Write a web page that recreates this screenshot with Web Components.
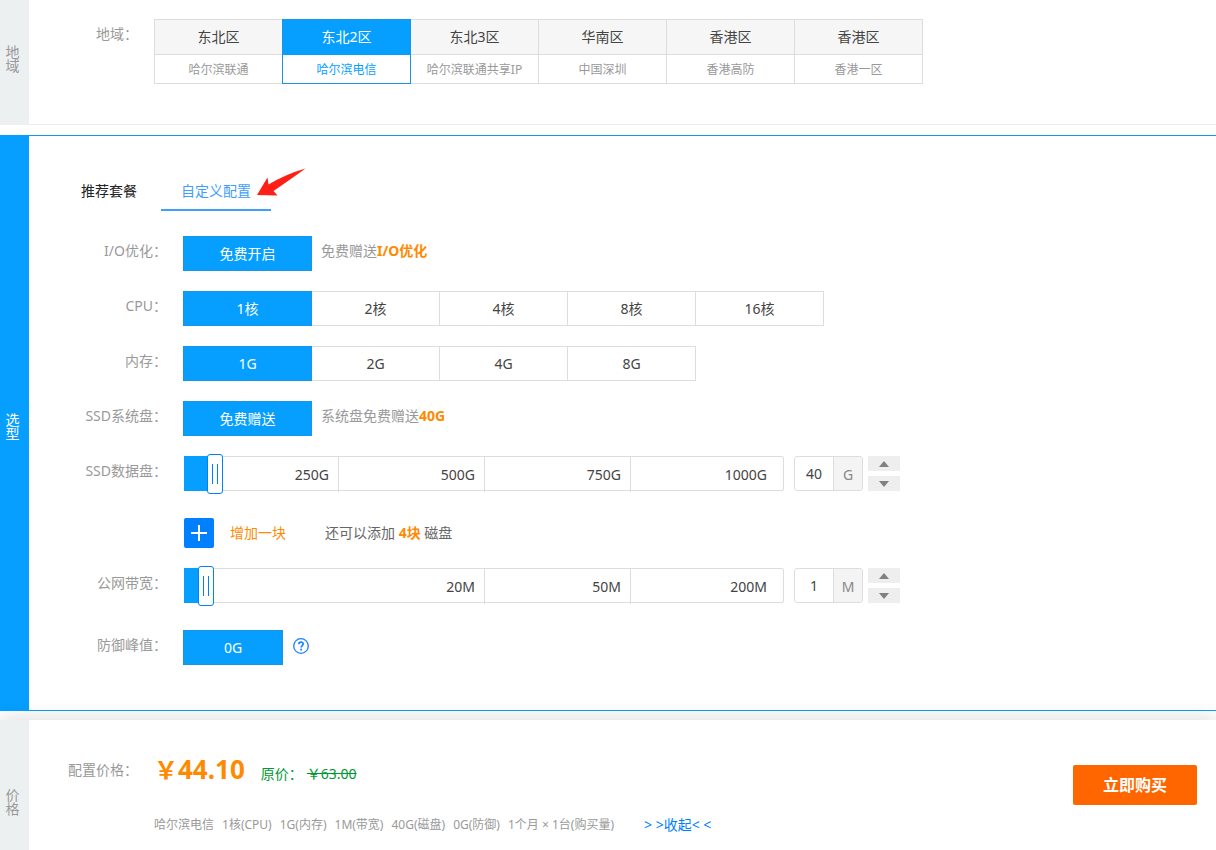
<!DOCTYPE html>
<html lang="zh-CN">
<head>
<meta charset="utf-8">
<meta name="viewport" content="width=device-width, initial-scale=1">
<title>云服务器购买</title>
<style>
  html, body { height: 100%; margin: 0; }
  body {
    font: 14px/20px "Noto Sans", "Noto Sans CJK SC", sans-serif;
    color: #444;
    background: #fff;
  }
</style>
</head>
<body>
<buy-page></buy-page>

<script>
const define = (name, html, setup) => {
  const tpl = document.createElement('template');
  tpl.innerHTML = `<style>*, ::before { box-sizing: border-box; } button, input { font: inherit; color: inherit; margin: 0; padding: 0; border: 0; background: none; } button { cursor: pointer; }</style>` + html;
  customElements.define(name, class extends HTMLElement {
    constructor() {
      super();
      this.attachShadow({ mode: 'open' }).append(tpl.content.cloneNode(true));
    }
    connectedCallback() {
      if (setup) setup(this, s => this.shadowRoot.querySelector(s));
    }
  });
};

/* Section with a vertical caption bar on the left */
define('side-section', `
  <style>
    :host { display: flex; border-bottom: 1px solid #ebeef0; }
    :host([active]) { border-top: 1px solid #1296e8; border-bottom-color: #069fff; }
    :host([last]) { border: 0; position: relative; background: #fff; box-shadow: 0 0 20px rgba(0,0,0,.16); }
    .side {
      flex: 0 0 29px; display: flex; align-items: center; justify-content: center;
      padding: 0 4px 8px 0; background: #ecf0f1; color: #999; margin-bottom: -1px;
    }
    :host([active]) .side { background: #069fff; color: #fff; padding: 8px 4px 0 0; margin: -1px 0; }
    :host([last]) .side { padding: 32px 4px 0 0; margin: 0; }
    h2 { margin: 0; width: 14px; font-size: 14px; line-height: 14px; font-weight: 400; word-break: break-all; }
    .body { flex: 1; min-width: 0; }
  </style>
  <div class="side"><h2></h2></div>
  <div class="body"><slot></slot></div>`,
  (el, $) => { $('h2').textContent = el.getAttribute('caption'); });

/* Label on the left, controls on the right */
define('form-row', `
  <style>
    :host { display: flex; align-items: flex-start; gap: 16px; }
    .label { flex: 0 0 var(--label-width, 138px); text-align: right; line-height: 30px; color: #999; }
    .content { flex: 1; min-width: 0; display: flex; align-items: flex-start; }
  </style>
  <div class="label"></div>
  <div class="content" role="group"><slot></slot></div>`,
  (el, $) => {
    const text = el.getAttribute('label') || '';
    $('.label').textContent = text;
    if (text) $('.content').setAttribute('aria-label', text);
  });

define('region-option', `
  <style>
    :host { display: block; flex: 0 1 129px; margin-right: -1px; }
    :host([selected]) { position: relative; z-index: 1; }
    button { display: block; width: 100%; border: 1px solid #ddd; background: #fff; text-align: center; }
    span { display: block; white-space: nowrap; }
    .name { line-height: 34px; background: #f6f6f6; border-bottom: 1px solid #ddd; }
    .line { height: 28px; font-size: 12px; line-height: 30px; color: #999; }
    :host([selected]) button { border-color: #1a95e4; }
    :host([selected]) .name { background: #069fff; border-color: #069fff; color: #fff; }
    :host([selected]) .line { color: #069fff; }
  </style>
  <button type="button"><span class="name"></span><span class="line"><slot></slot></span></button>`,
  (el, $) => {
    $('.name').textContent = el.getAttribute('name');
    $('button').setAttribute('aria-pressed', el.hasAttribute('selected'));
  });

define('option-button', `
  <style>
    :host { display: block; flex: 0 1 129px; margin-right: -1px; }
    :host([compact]) { flex-basis: 100px; }
    :host([selected]) { position: relative; z-index: 1; }
    button { display: block; width: 100%; height: 35px; border: 1px solid #ddd; background: #fff; line-height: 33px; white-space: nowrap; }
    :host([selected]) button { background: #069fff; border-color: #1a95e4; color: #fff; }
  </style>
  <button type="button"><slot></slot></button>`,
  (el, $) => $('button').setAttribute('aria-pressed', el.hasAttribute('selected')));

define('row-note', `
  <style>
    :host { display: block; margin-left: 10px; line-height: 30px; color: #999; }
    ::slotted(b) { color: #ff8a00; }
  </style><slot></slot>`);

define('plan-tabs', `
  <style>
    :host { display: flex; gap: 4px; padding-left: 32px; }
    button { position: relative; height: 40px; padding: 0 20px; color: #222; border-bottom: 2px solid transparent; line-height: 40px; }
    button[aria-selected=true] { color: #409eff; border-color: #409eff; }
    svg { position: absolute; left: 95px; top: -3px; pointer-events: none; }
  </style>
  <div role="tablist" style="display:contents">
    <button type="button" role="tab" aria-selected="false">推荐套餐</button>
    <button type="button" role="tab" aria-selected="true">自定义配置
      <svg width="50" height="30" viewBox="0 0 50 30" aria-hidden="true"><path fill="#ff1f14" d="M1 27 L11.500 9.500 L12.500 16.500 Q30 6 49.500 .500 Q35 11 17.500 23 L21.500 27.500 Z"/></svg>
    </button>
  </div>`);

/* Range input drawn over a scale; stops="span:label ..." gives each segment's share */
define('scale-slider', `
  <style>
    :host { display: block; position: relative; flex: 0 1 600px; margin-left: 1px; }
    .scale { display: grid; height: 35px; border: 1px solid #ddd; border-radius: 2px; }
    .scale span { padding-right: 9px; text-align: right; line-height: 35px; height: 35px; border-right: 1px solid #ddd; }
    .scale span:last-child { border: 0; padding-right: 16px; }
    input {
      -webkit-appearance: none; appearance: none; position: absolute; left: 0; top: -2px;
      width: 100%; height: 40px; cursor: pointer;
    }
    input::-webkit-slider-runnable-track {
      height: 40px;
      background: linear-gradient(#069fff, #069fff) 0 2px / var(--fill) 35px no-repeat;
      border-radius: 2px;
    }
    input::-webkit-slider-thumb {
      -webkit-appearance: none; width: 16px; height: 40px;
      border: 1px solid #0080ff; border-radius: 3px;
      background:
        linear-gradient(#0080ff, #0080ff) 4px 9px / 1px 20px no-repeat,
        linear-gradient(#0080ff, #0080ff) 9px 9px / 1px 20px no-repeat,
        #fff;
    }
  </style>
  <div class="scale"></div>
  <input type="range" min="0" max="1000">`,
  (el, $) => {
    const stops = el.getAttribute('stops').split(' ').map(s => s.split(':'));
    const scale = $('.scale'), input = $('input');
    scale.style.gridTemplateColumns = stops.map(s => `minmax(0, ${s[0]}fr)`).join(' ');
    scale.replaceChildren(...stops.map(s => Object.assign(document.createElement('span'), { textContent: s[1] })));
    input.value = el.getAttribute('value');
    input.setAttribute('aria-label', el.getAttribute('label'));
    const paint = () => input.style.setProperty('--fill', input.value / 10 + '%');
    input.addEventListener('input', paint);
    paint();
  });

define('number-stepper', `
  <style>
    :host { display: flex; gap: 5px; margin-left: 10px; }
    .box { display: flex; width: 69px; height: 35px; border: 1px solid #ddd; border-radius: 3px; overflow: hidden; }
    input { flex: 1; min-width: 0; text-align: center; }
    .unit { flex: 0 0 29px; border-left: 1px solid #ddd; background: #f4f4f4; color: #888; text-align: center; line-height: 35px; }
    .arrows { display: grid; gap: 5px; }
    button { display: flex; align-items: center; justify-content: center; width: 32px; height: 15px; background: #eee; }
    svg { display: block; }
  </style>
  <div class="box"><input type="text" inputmode="numeric"><span class="unit"></span></div>
  <div class="arrows">
    <button type="button" aria-label="增加"><svg width="10" height="6"><path d="M0 6 5 0 10 6Z" fill="#808080"/></svg></button>
    <button type="button" aria-label="减少"><svg width="10" height="6"><path d="M0 0 5 6 10 0Z" fill="#808080"/></svg></button>
  </div>`,
  (el, $) => {
    $('input').value = el.getAttribute('value');
    $('input').setAttribute('aria-label', el.getAttribute('label'));
    $('.unit').textContent = el.getAttribute('unit');
  });

define('add-disk', `
  <style>
    :host { display: flex; align-items: center; margin-left: 1px; line-height: 30px; color: #666; }
    button { width: 30px; height: 30px; border-radius: 2px; background: #0080ff; }
    svg { display: block; margin: auto; }
    a { margin: 0 39px 0 16px; color: #ff8a00; text-decoration: none; }
    b { color: #ff8a00; }
  </style>
  <button type="button" aria-label="增加一块磁盘"><svg width="16" height="16"><path d="M8 0V16M0 8H16" stroke="#fff" stroke-width="2"/></svg></button>
  <a href="#">增加一块</a><span>还可以添加 <b>4块</b> 磁盘</span>`);

define('help-tip', `
  <style>
    :host { display: block; margin: 8px 0 0 11px; }
    button, svg { display: block; }
  </style>
  <button type="button" aria-label="帮助"><svg width="16" height="16" viewBox="0 0 16 16" fill="none" stroke="#1a82ff"><circle cx="8" cy="8" r="7.300" stroke-width="1.300"/><path d="M5.800 6.300C5.800 3.300 10.300 3.500 10.200 6.100C10.200 7.600 8.100 7.600 8.100 9.500" stroke-width="1.700"/><path d="M8.100 10.800V12.500" stroke-width="1.800"/></svg></button>`);

define('price-panel', `
  <style>
    :host { display: flex; align-items: flex-start; padding: 30px 19px 16px 0; }
    .info { flex: 1; min-width: 0; display: grid; grid-template-columns: 109px 1fr; column-gap: 16px; }
    .label { text-align: right; line-height: 40px; color: #999; }
    .prices { display: flex; align-items: baseline; line-height: 38px; }
    .now { font-size: 26px; font-weight: 700; color: #ff8a00; }
    .sign { font-size: 24px; }
    .old { margin-left: 16px; color: #093; }
    .old s { margin-left: 4px; }
    .summary { grid-column: 2; display: flex; flex-wrap: wrap; align-items: center; gap: 0 8px; margin-top: 22px; font-size: 12px; line-height: 20px; color: #999; }
    a { margin-left: 22px; font-size: 14px; color: #0080ff; text-decoration: none; }
    .buy { width: 124px; height: 40px; margin-top: 15px; border-radius: 2px; background: #f60; color: #fff; font-size: 16px; font-weight: 700; }
  </style>
  <div class="info">
    <div class="label">配置价格：</div>
    <div class="prices"><span class="now"><span class="sign">￥</span>44.10</span><span class="old">原价：<s>￥63.00</s></span></div>
    <div class="summary">
      <span>哈尔滨电信</span><span>1核(CPU)</span><span>1G(内存)</span><span>1M(带宽)</span><span>40G(磁盘)</span><span>0G(防御)</span><span>1个月 × 1台(购买量)</span>
      <a href="#">&gt; &gt;收起&lt; &lt;</a>
    </div>
  </div>
  <button class="buy" type="button">立即购买</button>`);

define('buy-page', `
  <style>
    :host { display: flex; flex-direction: column; min-height: 100%; }
    .region { padding: 19px 0 40px; --label-width: 109px; }
    .config { padding: 35px 0 45px; }
    .rows { display: grid; gap: 20px; padding-top: 25px; }
    .spaced { margin-top: 7px; }
    side-section[last] { flex: 1; margin-top: 9px; }
    side-section[active] { margin-top: 10px; }
  </style>
  <side-section caption="地域">
    <div class="region">
      <form-row label="地域：">
        <region-option name="东北区">哈尔滨联通</region-option>
        <region-option name="东北2区" selected>哈尔滨电信</region-option>
        <region-option name="东北3区">哈尔滨联通共享IP</region-option>
        <region-option name="华南区">中国深圳</region-option>
        <region-option name="香港区">香港高防</region-option>
        <region-option name="香港区">香港一区</region-option>
      </form-row>
    </div>
  </side-section>
  <side-section caption="选型" active>
    <div class="config">
      <plan-tabs></plan-tabs>
      <div class="rows">
        <form-row label="I/O优化："><option-button selected>免费开启</option-button><row-note>免费赠送<b>I/O优化</b></row-note></form-row>
        <form-row label="CPU："><option-button selected>1核</option-button><option-button>2核</option-button><option-button>4核</option-button><option-button>8核</option-button><option-button>16核</option-button></form-row>
        <form-row label="内存："><option-button selected>1G</option-button><option-button>2G</option-button><option-button>4G</option-button><option-button>8G</option-button></form-row>
        <form-row label="SSD系统盘："><option-button selected>免费赠送</option-button><row-note>系统盘免费赠送<b>40G</b></row-note></form-row>
        <form-row label="SSD数据盘：">
          <scale-slider label="SSD数据盘" value="40" stops="154:250G 146:500G 146:750G 152:1000G"></scale-slider>
          <number-stepper label="数据盘容量" value="40" unit="G"></number-stepper>
        </form-row>
        <form-row class="spaced"><add-disk></add-disk></form-row>
        <form-row label="公网带宽：">
          <scale-slider label="公网带宽" value="24" stops="300:20M 146:50M 152:200M"></scale-slider>
          <number-stepper label="带宽" value="1" unit="M"></number-stepper>
        </form-row>
        <form-row class="spaced" label="防御峰值："><option-button compact selected>0G</option-button><help-tip></help-tip></form-row>
      </div>
    </div>
  </side-section>
  <side-section caption="价格" last><price-panel></price-panel></side-section>`);
</script>
</body>
</html>
